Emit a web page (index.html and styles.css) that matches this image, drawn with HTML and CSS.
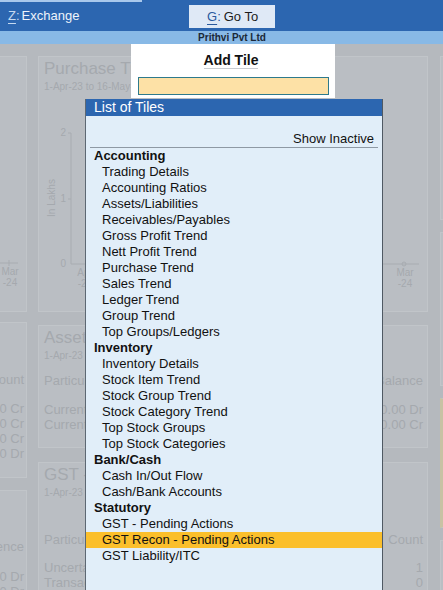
FILE: index.html
```html
<!DOCTYPE html>
<html lang="en">
<head>
    <meta charset="UTF-8">
    <meta name="viewport" content="width=device-width, initial-scale=1.0">
    <title>Add Tile</title>
    <link rel="stylesheet" href="styles.css">
</head>
<body>
    <div class="topbar">
        <div class="tab"><span class="key">Z</span><span class="colon">:</span>Exchange</div>
        <div class="goto"><span class="key">G</span><span class="colon">:</span>Go To</div>
    </div>
    <div class="company">Prithvi Pvt Ltd</div>

    <div class="dashboard">
        <div class="col col-left">
            <div class="tile tile-row1">
                <svg class="chart" width="27" height="255">
                    <line x1="0" y1="206" x2="18" y2="206" class="axis"/>
                    <line x1="9" y1="203" x2="9" y2="209" class="axis"/>
                    <text x="10" y="218" text-anchor="middle">Mar</text>
                    <text x="10" y="229" text-anchor="middle">-24</text>
                </svg>
            </div>
            <div class="tile tile-l2">
                <div class="row head"><span>Amount</span></div>
                <div class="rows">
                    <div class="row"><span>0 Cr</span></div>
                    <div class="row"><span>0 Cr</span></div>
                    <div class="row"><span>0 Cr</span></div>
                    <div class="row"><span>0 Dr</span></div>
                </div>
            </div>
            <div class="tile tile-l3">
                <div class="row head"><span>Difference</span></div>
                <div class="rows">
                    <div class="row"><span>0 Dr</span></div>
                    <div class="row"><span>0 Dr</span></div>
                </div>
            </div>
        </div>

        <div class="col col-mid">
            <div class="tile tile-row1">
                <div class="tile-title">Purchase Trend</div>
                <div class="tile-date">1-Apr-23 to 16-May-24</div>
                <svg class="chart" width="388" height="212">
                    <line x1="32" y1="40" x2="32" y2="171" class="axis"/>
                    <line x1="32" y1="171" x2="380" y2="171" class="axis"/>
                    <line x1="29" y1="40" x2="32" y2="40" class="axis"/>
                    <line x1="29" y1="106" x2="32" y2="106" class="axis"/>
                    <text x="27" y="43" text-anchor="end">2</text>
                    <text x="27" y="109" text-anchor="end">1</text>
                    <text x="27" y="174" text-anchor="end">0</text>
                    <text x="16" y="105" text-anchor="middle" transform="rotate(-90 16 105)">In Lakhs</text>
                    <text x="46" y="183" text-anchor="middle">Apr</text>
                    <text x="46" y="194" text-anchor="middle">-23</text>
                    <circle cx="365" cy="171" r="2" class="dot"/>
                    <text x="366" y="183" text-anchor="middle">Mar</text>
                    <text x="366" y="194" text-anchor="middle">-24</text>
                </svg>
            </div>
            <div class="tile tile-assets">
                <div class="tile-title">Assets/Liabilities</div>
                <div class="tile-date">1-Apr-23 to 16-May-24</div>
                <div class="table">
                    <div class="trow head"><span>Particulars</span><span>Balance</span></div>
                    <div class="tbody">
                        <div class="trow"><span>Current Assets</span><span>0.00 Dr</span></div>
                        <div class="trow"><span>Current Liabilities</span><span>0.00 Cr</span></div>
                    </div>
                </div>
            </div>
            <div class="tile tile-gst">
                <div class="tile-title">GST - Pending Actions</div>
                <div class="tile-date">1-Apr-23 to 16-May-24</div>
                <div class="table">
                    <div class="trow head"><span>Particulars</span><span>Count</span></div>
                    <div class="tbody">
                        <div class="trow"><span>Uncertain Transactions</span><span>1</span></div>
                        <div class="trow"><span>Transactions to be filed</span><span>0</span></div>
                    </div>
                </div>
            </div>
        </div>

        <div class="col col-right">
            <div class="tile tile-r1"></div>
            <div class="tile tile-r2"></div>
            <div class="tile tile-r3"></div>
            <div class="tile tile-r4"></div>
        </div>
    </div>

    <div class="add-tile">
        <div class="add-title"><span>Add Tile</span></div>
        <input type="text" class="add-input">
    </div>

    <div class="tile-list">
        <div class="list-header">List of Tiles</div>
        <div class="list-body">
            <div class="show-inactive">Show Inactive</div>

            <div class="group">Accounting</div>
            <div class="item">Trading Details</div>
            <div class="item">Accounting Ratios</div>
            <div class="item">Assets/Liabilities</div>
            <div class="item">Receivables/Payables</div>
            <div class="item">Gross Profit Trend</div>
            <div class="item">Nett Profit Trend</div>
            <div class="item">Purchase Trend</div>
            <div class="item">Sales Trend</div>
            <div class="item">Ledger Trend</div>
            <div class="item">Group Trend</div>
            <div class="item">Top Groups/Ledgers</div>

            <div class="group">Inventory</div>
            <div class="item">Inventory Details</div>
            <div class="item">Stock Item Trend</div>
            <div class="item">Stock Group Trend</div>
            <div class="item">Stock Category Trend</div>
            <div class="item">Top Stock Groups</div>
            <div class="item">Top Stock Categories</div>

            <div class="group">Bank/Cash</div>
            <div class="item">Cash In/Out Flow</div>
            <div class="item">Cash/Bank Accounts</div>

            <div class="group">Statutory</div>
            <div class="item">GST - Pending Actions</div>
            <div class="item selected">GST Recon - Pending Actions</div>
            <div class="item">GST Liability/ITC</div>
        </div>
    </div>
</body>
</html>
```

FILE: styles.css
```css
:root {
    --bar-blue: #2c66b0;
    --company-blue: #88b9e6;
    --dim-bg: #b5b9be;
    --dim-tile: #babec3;
    --dim-border: #c1c5c9;
    --dim-text: #a5a9ae;
    --list-bg: #e1eef9;
    --highlight: #fbbf2b;
}

body {
    font-family: "Liberation Sans", Arial, sans-serif;
    margin: 0;
    width: 443px;
    height: 590px;
    overflow: hidden;
    position: relative;
    background-color: var(--dim-bg);
    color: #111;
}

/* top bar */
.topbar {
    display: flex;
    height: 31px;
    background-color: var(--bar-blue);
    font-size: 13px;
}
.tab {
    width: 134px;
    padding-left: 8px;
    border-top: 2px solid #a9c8ec;
    line-height: 28px;
    color: #eef4fb;
}
.tab .key {
    color: #c6daf1;
    text-decoration: underline;
    text-underline-offset: 3px;
}
.tab .colon {
    color: #c6daf1;
    margin-right: 2px;
}
.goto {
    margin: 5px 0 0 47px;
    width: 68px;
    height: 23px;
    padding-left: 18px;
    line-height: 23px;
    background-color: #dfe9f6;
    color: #1c1c1c;
}
.goto .key {
    color: #2a5a9e;
    text-decoration: underline;
    text-underline-offset: 3px;
}
.goto .colon {
    color: #2a5a9e;
    margin-right: 3px;
}
.company {
    height: 13px;
    line-height: 13px;
    padding-left: 21px;
    text-align: center;
    background-color: var(--company-blue);
    font-size: 10px;
    font-weight: bold;
    color: #1a2838;
}

/* dimmed dashboard behind the popups */
.dashboard {
    display: flex;
    padding-top: 12px;
    color: var(--dim-text);
}
.col {
    display: flex;
    flex-direction: column;
    flex-shrink: 0;
}
.col-left {
    width: 28px;
    margin-left: -1px;
    gap: 10px;
}
.col-mid {
    width: 390px;
    margin-left: 11px;
    gap: 13px;
}
.col-right {
    width: 40px;
    margin-left: 12px;
    gap: 12px;
}
.tile {
    background-color: var(--dim-tile);
    border: 1px solid var(--dim-border);
    box-sizing: border-box;
    padding: 2px 4px 0 5px;
    overflow: hidden;
    flex-shrink: 0;
}
.tile-row1 {
    height: 256px;
}
.col-left .tile {
    padding: 0;
}
.col-left .tile-row1 .chart {
    display: block;
    margin-left: 0;
}
.tile-l2 {
    height: 156px;
    padding-top: 49px !important;
}
.tile-l3 {
    height: 140px;
    margin-top: 2px;
    padding-top: 48px !important;
}
.col-left .row {
    display: flex;
    justify-content: flex-end;
    font-size: 13px;
    line-height: 15px;
    padding-right: 2px;
    white-space: nowrap;
}
.col-left .row span {
    flex-shrink: 0;
}
.col-left .rows {
    margin-top: 14px;
}
.tile-l3 .rows {
    margin-top: 15px;
}

.tile-title {
    font-size: 17px;
    line-height: 20px;
    white-space: nowrap;
}
.tile-date {
    font-size: 10px;
    line-height: 12px;
    margin-top: 2px;
    white-space: nowrap;
}
.chart {
    display: block;
    margin-left: -5px;
    font-family: "Liberation Sans", Arial, sans-serif;
}
.chart text {
    font-size: 10px;
    fill: var(--dim-text);
}
.chart .axis {
    stroke: #a8acb1;
    stroke-width: 1;
}
.chart .dot {
    fill: none;
    stroke: #a8acb1;
}

.tile-assets {
    height: 123px;
}
.tile-gst {
    height: 140px;
    margin-top: 1px;
}
.table {
    font-size: 13px;
    line-height: 15px;
}
.tile-assets .table {
    margin-top: 11px;
}
.tile-gst .table {
    margin-top: 33px;
}
.trow {
    display: flex;
    justify-content: space-between;
    white-space: nowrap;
}
.tile-assets .tbody {
    margin-top: 14px;
}
.tile-gst .tbody {
    margin-top: 13px;
}

.tile-r1 {
    height: 164px;
}
.tile-r2 {
    height: 154px;
}
.tile-r3 {
    height: 130px;
    border-left: 3px solid #c8c2a4;
}
.tile-r4 {
    height: 80px;
}

/* Add Tile popup */
.add-tile {
    position: absolute;
    left: 131px;
    top: 44px;
    width: 204px;
    height: 54px;
    box-sizing: border-box;
    padding: 8px 6px 0 7px;
    background-color: #fff;
}
.add-title {
    text-align: center;
    padding-right: 5px;
    font-size: 14px;
    font-weight: bold;
    line-height: 16px;
    color: #111;
}
.add-title span {
    display: inline-block;
    border-bottom: 1px solid #c9cdd2;
}
.add-input {
    display: block;
    margin: 8px 0 0;
    width: 191px;
    height: 18px;
    box-sizing: border-box;
    padding: 0;
    border: 1px solid #2e7a8c;
    background-color: #fde1a6;
    outline: none;
}

/* List of Tiles popup */
.tile-list {
    position: absolute;
    left: 85px;
    top: 99px;
    bottom: 0;
    width: 298px;
    box-sizing: border-box;
    border-left: 1px solid #5d6873;
    border-right: 1px solid #4f5963;
    background-color: var(--list-bg);
    font-size: 13px;
}
.list-header {
    height: 17px;
    line-height: 17px;
    padding-left: 8px;
    background-color: var(--bar-blue);
    color: #fff;
    font-size: 14px;
}
.list-body {
    line-height: 16px;
}
.show-inactive {
    margin: 15px 4px 0;
    padding-right: 4px;
    text-align: right;
    border-bottom: 1px solid #8e99a4;
}
.group {
    padding-left: 8px;
    font-weight: bold;
}
.item {
    padding-left: 16px;
}
.item.selected {
    background-color: var(--highlight);
}
```
